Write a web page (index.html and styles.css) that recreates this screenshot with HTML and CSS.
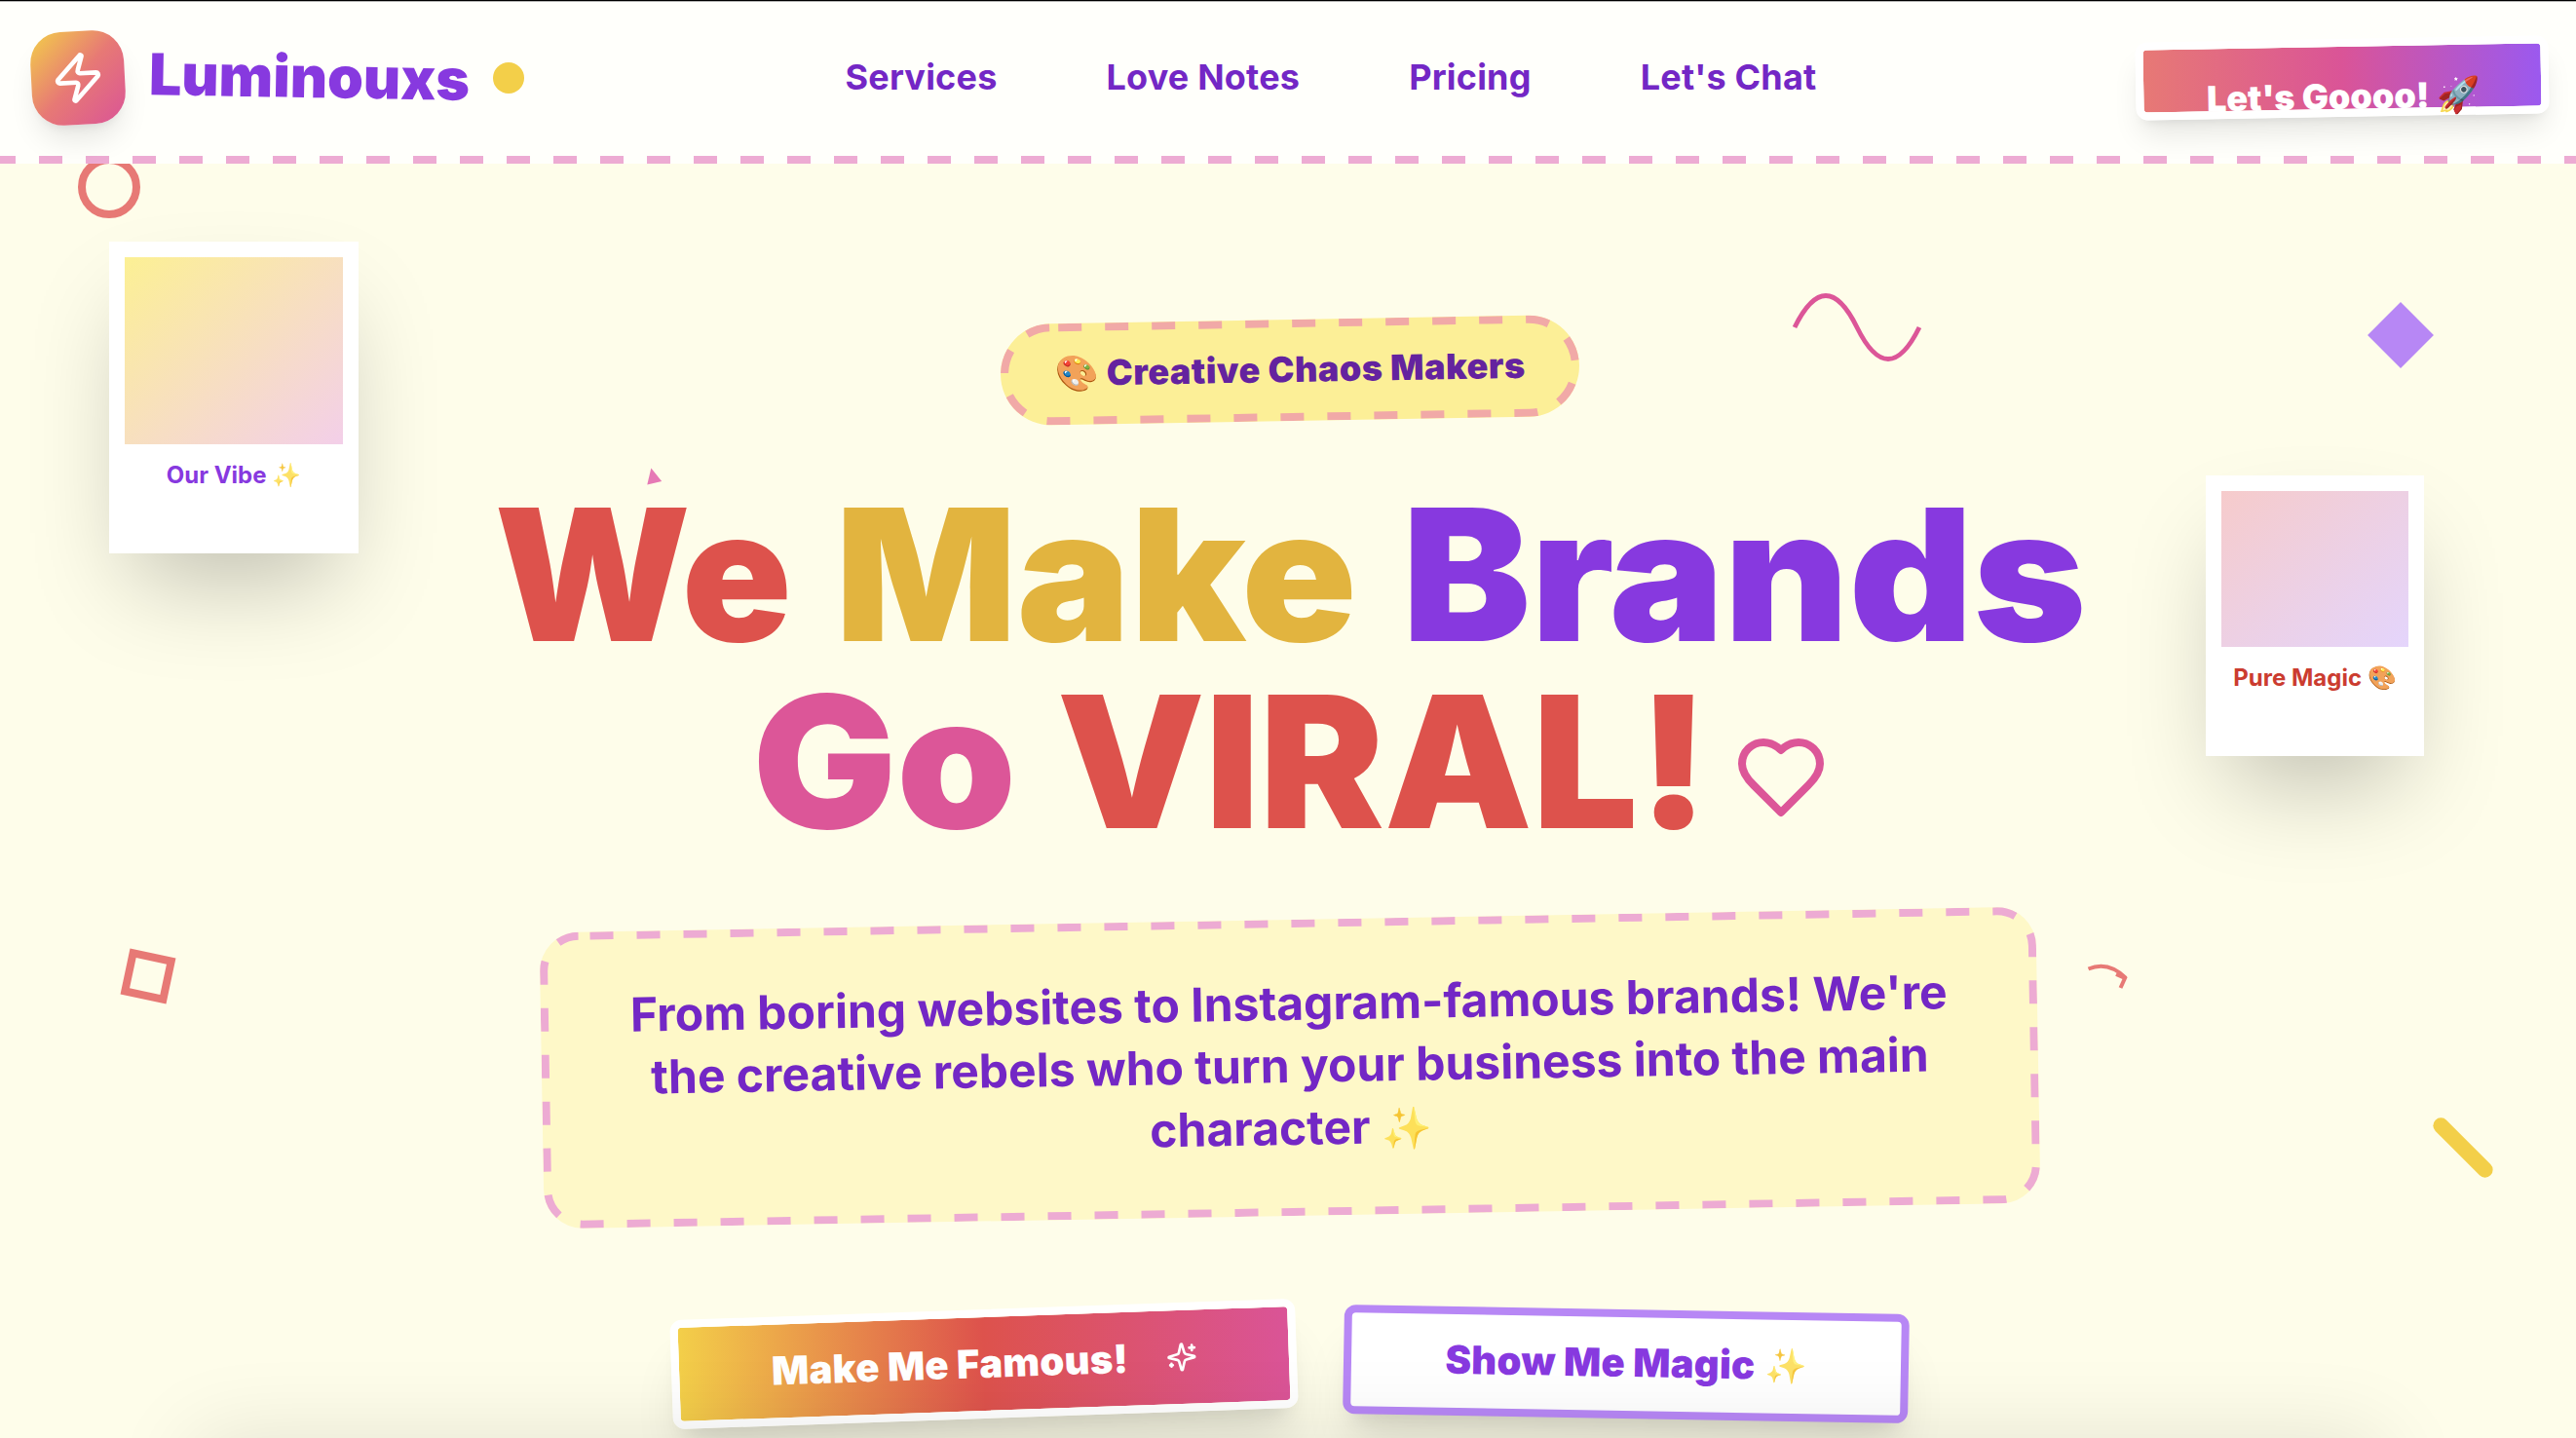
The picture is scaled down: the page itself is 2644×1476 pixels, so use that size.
FILE: index.html
```html
<!DOCTYPE html>
<html lang="en">
<head>
    <meta charset="UTF-8">
    <meta name="viewport" content="width=device-width, initial-scale=1.0">
    <title>Luminouxs</title>
    <link rel="stylesheet" href="styles.css">
</head>
<body>
    <header class="header">
        <div class="brand">
            <div class="brand-icon">
                <svg viewBox="0 0 24 24"><path d="M4 14a1 1 0 0 1-.78-1.63l9.9-10.2a.5.5 0 0 1 .86.46l-1.92 6.02A1 1 0 0 0 13 10h7a1 1 0 0 1 .78 1.63l-9.9 10.2a.5.5 0 0 1-.86-.46l1.92-6.02A1 1 0 0 0 11 14z"/></svg>
            </div>
            <span class="brand-name">Luminouxs</span>
            <span class="brand-dot"></span>
        </div>
        <nav class="nav">
            <a href="#services">Services</a>
            <a href="#love">Love Notes</a>
            <a href="#pricing">Pricing</a>
            <a href="#chat">Let's Chat</a>
        </nav>
        <button class="cta">Let's Goooo! 🚀</button>
    </header>

    <main class="hero">
        <!-- Floating doodles -->
        <div class="doodle circle"></div>
        <div class="doodle diamond"></div>
        <div class="doodle square"></div>
        <div class="doodle bar"></div>
        <svg class="doodle squiggle" viewBox="0 0 136 80"><path d="M4 40Q36-25 68 40T132 40"/></svg>
        <svg class="doodle triangle" viewBox="0 0 16 18"><path d="M4.3.5 15.2 14 .3 17.5Z"/></svg>
        <svg class="doodle arrow" viewBox="0 0 48 32"><path d="M3.500 10.500Q24 2 42 20M32 16L41 20L36.500 30"/></svg>

        <!-- Polaroids -->
        <div class="polaroid polaroid-left">
            <div class="photo"></div>
            <p>Our Vibe <span class="sparkle">✨</span></p>
        </div>
        <div class="polaroid polaroid-right">
            <div class="photo"></div>
            <p>Pure Magic 🎨</p>
        </div>

        <div class="badge">
            <svg class="dashes"><rect x="4" y="4" width="586" height="96" rx="48"/></svg>
            <span>🎨</span> Creative Chaos Makers
        </div>

        <h1 class="title">
            <span class="line line-top">
                <span class="word we">We</span>
                <span class="word make">Make</span>
                <span class="word brands">Brands</span>
            </span>
            <span class="line line-bottom">
                <span class="word go">Go</span>
                <span class="word viral">VIRAL!</span>
                <svg class="heart" viewBox="0 0 24 24"><path d="M19 14c1.490-1.460 3-3.210 3-5.500A5.500 5.500 0 0 0 16.500 3c-1.760 0-3 .5-4.500 2-1.500-1.500-2.740-2-4.500-2A5.500 5.500 0 0 0 2 8.500c0 2.300 1.500 4.050 3 5.500l7 7Z"/></svg>
            </span>
        </h1>

        <div class="tagline">
            <svg class="dashes"><rect x="4" y="4" width="1528" height="296" rx="36"/></svg>
            <p>From boring websites to Instagram-famous brands! We're the creative rebels who turn your business into the main character <span class="sparkle">✨</span></p>
        </div>

        <div class="actions">
            <button class="btn btn-primary">
                Make Me Famous!
                <svg viewBox="0 0 24 24"><path d="M9.937 15.5A2 2 0 0 0 8.5 14.063l-6.135-1.582a.5.5 0 0 1 0-.962L8.5 9.936A2 2 0 0 0 9.937 8.5l1.582-6.135a.5.5 0 0 1 .963 0L14.063 8.5A2 2 0 0 0 15.5 9.937l6.135 1.581a.5.5 0 0 1 0 .964L15.5 14.063a2 2 0 0 0-1.437 1.437l-1.582 6.135a.5.5 0 0 1-.963 0z"/><path d="M20 3v4M22 5h-4M4 17v2M5 18H3"/></svg>
            </button>
            <button class="btn btn-secondary">Show Me Magic <span class="sparkle">✨</span></button>
        </div>
    </main>
</body>
</html>
```
FILE: styles.css
```css
* {
    box-sizing: border-box;
    margin: 0;
    padding: 0;
}
body {
    height: 1476px;
    overflow: hidden;
    background: #fefdea;
    font-family: Inter, "Liberation Sans", sans-serif;
}
button {
    font-family: inherit;
    cursor: pointer;
    white-space: nowrap;
}
svg {
    fill: none;
    stroke-linecap: round;
    stroke-linejoin: round;
}
.sparkle {
    font-size: 0.87em;
    opacity: 0.75;
}

/* Header */
.header {
    position: relative;
    z-index: 10;
    display: flex;
    align-items: center;
    justify-content: space-between;
    height: 168px;
    padding: 0 28px 8px 32px;
    background:
        repeating-linear-gradient(90deg, #edabd3 0 16px, transparent 16px 40px, #edabd3 40px 48px) 0 100% / 100% 8px no-repeat,
        #fffffb;
    box-shadow: inset 0 1px #000, inset 0 2px #b5b5b3;
}
.brand {
    display: flex;
    align-items: center;
    gap: 24px;
}
.brand-icon {
    display: flex;
    align-items: center;
    justify-content: center;
    width: 96px;
    height: 96px;
    border-radius: 32px;
    background: linear-gradient(135deg, #f3cf49, #e77975 50%, #da5497);
    box-shadow: 0 20px 30px -6px rgba(0,0,0,0.1), 0 8px 12px -8px rgba(0,0,0,0.1);
    transform: rotate(-3deg);
}
.brand-icon svg {
    width: 56px;
    stroke: #fff;
    stroke-width: 2;
}
.brand-name {
    padding: 0 0 3px 1px;
    font-size: 59px;
    font-weight: 900;
    color: #8739df;
    transform: rotate(1deg);
}
.brand-dot {
    width: 32px;
    height: 32px;
    border-radius: 50%;
    background: #f3cf49;
}
.nav {
    display: flex;
    gap: 112px;
    padding: 0 0 2px 2px;
}
.nav a {
    font-size: 36px;
    font-weight: 700;
    letter-spacing: 0.2px;
    color: #7327c5;
    text-decoration: none;
}
.cta {
    width: 424px;
    height: 80px;
    padding: 38px 0 0 2px;
    border: 8px solid #fff;
    border-radius: 12px;
    background: linear-gradient(90deg, #e77975, #da5497 50%, #9b59ef) padding-box;
    box-shadow: 0 20px 30px -6px rgba(0,0,0,0.1), 0 8px 12px -8px rgba(0,0,0,0.1);
    color: #fff;
    font-size: 36px;
    font-weight: 900;
    line-height: 27px;
    transform: rotate(-1deg);
}

/* Hero */
.hero {
    position: relative;
    display: flex;
    flex-direction: column;
    align-items: center;
    height: 1308px;
    padding: 160px 0 0 4px;
    overflow: hidden;
}
/* shadow of the section below */
.hero::after {
    content: "";
    position: absolute;
    top: 100%;
    left: 200px;
    right: 200px;
    height: 200px;
    box-shadow: 0 0 90px rgba(0,0,0,0.11);
}
.dashes {
    position: absolute;
    inset: 0;
    width: 100%;
    height: 100%;
    stroke-width: 8;
    stroke-dasharray: 24 24;
    stroke-linecap: butt;
}
.badge {
    position: relative;
    display: flex;
    align-items: center;
    justify-content: center;
    gap: 8px;
    width: 594px;
    height: 104px;
    padding-bottom: 2px;
    border-radius: 52px;
    background: #fcef97;
    color: #64239f;
    font-size: 36px;
    font-weight: 900;
    letter-spacing: 0.5px;
    transform: rotate(-1deg);
}
.badge .dashes {
    stroke: #f1a9a7;
    stroke-dashoffset: -8px;
}
.title {
    margin-top: 62px;
    font-size: 188px;
    font-weight: 900;
    line-height: 192px;
}
.line {
    display: flex;
    justify-content: center;
    height: 192px;
}
.line-top {
    padding-right: 18px;
}
.line-bottom {
    padding-left: 6px;
}
.we {
    color: #dd524c;
    transform: scaleX(0.99);
}
.make {
    margin: 0 73px 0 53px;
    color: #e2b43f;
    transform: scaleX(1.038);
}
.brands {
    color: #8739df;
    transform: scaleX(1.05);
}
.go {
    color: #dc5698;
    transform: scaleX(1.045);
}
.viral {
    margin-left: 54px;
    color: #dd524c;
    transform: scaleX(1.019);
}
.heart {
    width: 96px;
    height: 96px;
    margin: 64px 0 0 32px;
    stroke: #dc5698;
    stroke-width: 2;
}
.tagline {
    position: relative;
    width: 1536px;
    height: 304px;
    margin-top: 66px;
    padding: 54px 56px;
    border-radius: 40px;
    background: #fef8c8;
    color: #7327c5;
    font-size: 48px;
    font-weight: 700;
    line-height: 64px;
    text-align: center;
    transform: rotate(-1deg);
}
.tagline .dashes {
    stroke: #edabd3;
    stroke-dashoffset: -12px;
}
.actions {
    display: flex;
    gap: 48px;
    margin-top: 96px;
}
.btn {
    display: flex;
    align-items: center;
    justify-content: center;
    height: 112px;
    border-radius: 12px;
    box-shadow: 0 40px 50px -10px rgba(0,0,0,0.1), 0 16px 20px -12px rgba(0,0,0,0.1);
    font-size: 40px;
    font-weight: 900;
    letter-spacing: 0.25px;
}
.btn-primary {
    gap: 39px;
    width: 642px;
    padding: 0 0 1px 1px;
    border: 8px solid #fff;
    background: linear-gradient(90deg, #f3cf49, #dd524c 50%, #da5497) padding-box;
    color: #fff;
    transform: rotate(-2deg);
}
.btn-primary svg {
    width: 32px;
    stroke: #fff;
    stroke-width: 2;
}
.btn-secondary {
    gap: 10px;
    width: 580px;
    padding-bottom: 3px;
    border: 8px solid #b787f5;
    background: #fff;
    color: #8739df;
    transform: rotate(1deg);
}

/* Polaroids */
.polaroid {
    position: absolute;
    padding: 16px;
    background: #fff;
    box-shadow: 0 50px 100px -24px rgba(0,0,0,0.25);
    font-size: 24px;
    font-weight: 700;
    text-align: center;
}
.polaroid p {
    margin-top: 16px;
    line-height: 32px;
    white-space: nowrap;
}
.polaroid .sparkle {
    font-size: 1em;
}
.polaroid-left {
    top: 80px;
    left: 112px;
    width: 256px;
    height: 320px;
    color: #8739df;
}
.polaroid-left .photo {
    height: 192px;
    background: linear-gradient(to bottom right, #fcf094, #f3cfe9);
}
.polaroid-right {
    top: 320px;
    right: 156px;
    width: 224px;
    height: 288px;
    color: #cb3c30;
}
.polaroid-right .photo {
    height: 160px;
    background: linear-gradient(to bottom right, #f6cbcb, #e4d5fc);
}

/* Doodles */
.doodle {
    position: absolute;
}
.circle {
    top: -8px;
    left: 80px;
    width: 64px;
    height: 64px;
    border: 8px solid #e77975;
    border-radius: 50%;
}
.diamond {
    top: 152px;
    left: 2440px;
    width: 48px;
    height: 48px;
    background: #b787f5;
    transform: rotate(45deg);
}
.square {
    top: 810px;
    left: 128px;
    width: 48px;
    height: 48px;
    border: 8px solid #e77975;
    transform: rotate(12deg);
}
.bar {
    top: 1002px;
    left: 2488px;
    width: 80px;
    height: 16px;
    border-radius: 8px;
    background: #f3cf49;
    transform: rotate(45deg);
}
.squiggle {
    top: 128px;
    left: 1838px;
    width: 136px;
    height: 80px;
    stroke: #dc5698;
    stroke-width: 4.8;
    stroke-linecap: butt;
}
.triangle {
    top: 312px;
    left: 664px;
    width: 16px;
    height: 18px;
    fill: #e679b5;
}
.arrow {
    top: 816px;
    left: 2140px;
    width: 48px;
    height: 32px;
    stroke: #e77975;
    stroke-width: 4;
    stroke-linecap: butt;
    stroke-linejoin: miter;
}
```
